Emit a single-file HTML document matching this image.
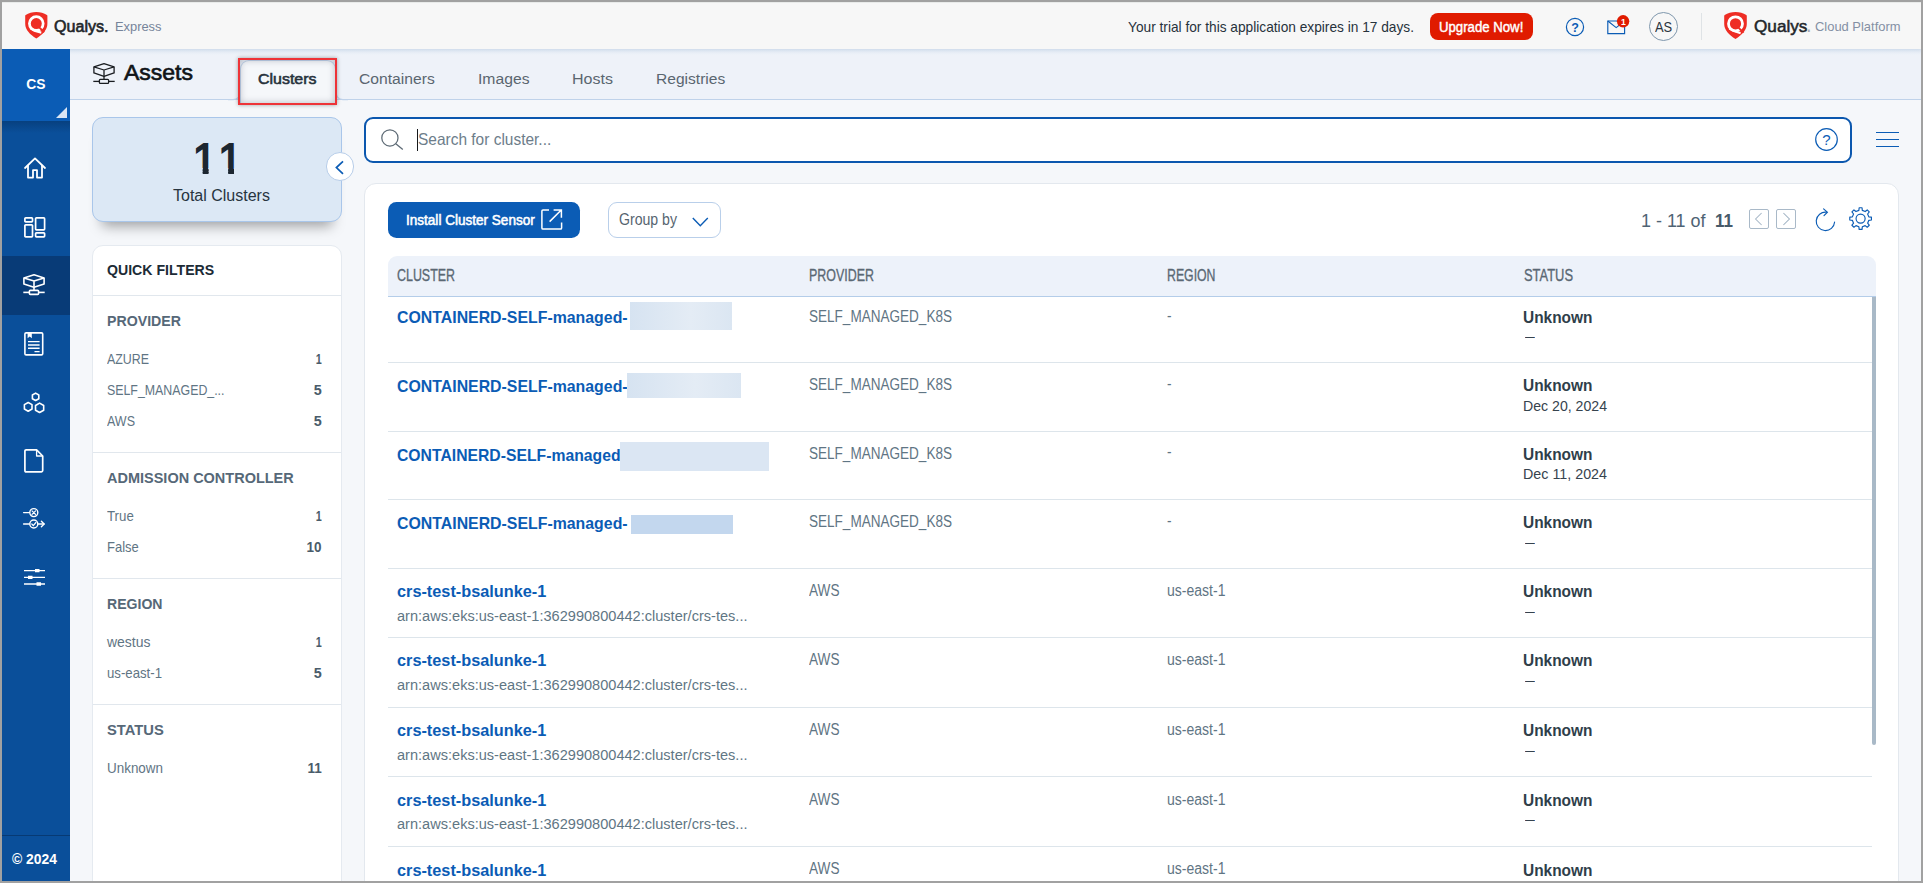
<!DOCTYPE html>
<html lang="en">
<head>
<meta charset="utf-8">
<title>Qualys Express - Assets - Clusters</title>
<style>
html,body{margin:0;padding:0;}
body{width:1923px;height:883px;overflow:hidden;background:#f5f7fa;font-family:"Liberation Sans",sans-serif;position:relative;}
#app{position:absolute;left:0;top:0;width:1923px;height:883px;overflow:hidden;}
.a{position:absolute;display:block;}
.t{position:absolute;white-space:nowrap;line-height:1;transform-origin:left center;display:block;}
svg{position:absolute;overflow:visible;}
.frame{position:absolute;background:#a1a1a1;z-index:50;}
.sep{position:absolute;left:388px;width:1484px;height:1px;background:#dde5eb;}
.fsep{position:absolute;left:93px;width:248px;height:1px;background:#e1e7ed;}
.blur{position:absolute;}
</style>
</head>
<body>
<div id="app">

<!-- main background -->
<div class="a" style="left:70px;top:100px;width:1851px;height:783px;background:#f5f7fa;"></div>

<!-- sub header -->
<div class="a" style="left:70px;top:49px;width:1851px;height:50.3px;background:#eef2f9;border-bottom:1.2px solid #bfd2ea;"></div>
<div class="a" style="left:70px;top:49px;width:1851px;height:6px;background:linear-gradient(#dfe8f3,#eef2f9);"></div>

<!-- active tab -->
<div class="a" style="left:240px;top:60px;width:94px;height:42px;background:#f5f7fa;border:1.2px solid #bfd2ea;border-bottom:none;border-radius:9px 9px 0 0;"></div>
<svg style="left:228px;top:88px" width="120" height="13" viewBox="0 0 120 13"><path d="M0 11.6 H5 Q12 11.6 12 4" fill="none" stroke="#bfd2ea" stroke-width="1.2"/><path d="M120 11.6 H115 Q108.2 11.6 108.2 4" fill="none" stroke="#bfd2ea" stroke-width="1.2"/></svg>
<div class="a" style="left:238px;top:58px;width:94.6px;height:43px;border:2px solid #ee3338;box-shadow:0 0 4px rgba(0,0,0,.35), inset 0 0 7px rgba(40,50,70,.3);"></div>

<!-- top bar -->
<div class="a" style="left:2px;top:2px;width:1919px;height:47px;background:#f7f7f7;box-shadow:0 1px 3px rgba(120,150,190,.18);"></div>
<div class="a" style="left:2px;top:2px;width:1919px;height:1px;background:#e9ebea;"></div>

<!-- logo left -->
<svg style="left:25px;top:11.9px" width="22.6" height="26.5" viewBox="0 0 23 27">
<path d="M11.5 0 C7.6 0 3.6 1.2 0.7 3.1 Q0.2 3.4 0.2 4 L0.2 12 C0.2 18 5 23 11.5 27 C18 23 22.8 18 22.8 12 L22.8 4 Q22.8 3.4 22.3 3.1 C19.4 1.2 15.4 0 11.5 0 Z" fill="#ee2d24"/>
<circle cx="11.5" cy="11.8" r="7" fill="none" stroke="#fff" stroke-width="2.8"/><path d="M5.4 16.4 Q10 19.9 16.6 21.1" fill="none" stroke="#fff" stroke-width="2.3"/><path d="M14.2 15.4 L19.6 20.6" fill="none" stroke="#ee2d24" stroke-width="1.9"/>
</svg>

<!-- upgrade button -->
<div class="a" style="left:1430px;top:13px;width:103px;height:26.5px;background:#e01b00;border-radius:8px;"></div>

<!-- help icon -->
<svg style="left:1565px;top:17px" width="20" height="20" viewBox="0 0 20 20"><circle cx="10" cy="10" r="8.6" fill="none" stroke="#0b5cb5" stroke-width="1.2"/><text x="10" y="14.6" font-size="12.5" font-weight="bold" text-anchor="middle" fill="#0b5cb5" font-family="Liberation Sans, sans-serif">?</text></svg>
<!-- mail icon -->
<svg style="left:1606px;top:14px" width="26" height="22" viewBox="0 0 26 22"><path d="M1.8 7 H18.6 V19.6 H1.8 Z" fill="none" stroke="#0b5cb5" stroke-width="1.15"/><path d="M1.8 7 L10.2 13.6 L18.6 7" fill="none" stroke="#0b5cb5" stroke-width="1.15"/><circle cx="17.1" cy="7.3" r="6.2" fill="#e01b00"/></svg>
<!-- avatar -->
<div class="a" style="left:1648.8px;top:11.8px;width:27.5px;height:27.5px;border:1.2px solid #7f97ad;border-radius:50%;"></div>
<div class="a" style="left:1700.6px;top:13px;width:1.2px;height:27px;background:#dfe3e6;"></div>
<!-- logo right -->
<svg style="left:1724px;top:11.9px" width="23" height="27" viewBox="0 0 23 27">
<path d="M11.5 0 C7.6 0 3.6 1.2 0.7 3.1 Q0.2 3.4 0.2 4 L0.2 12 C0.2 18 5 23 11.5 27 C18 23 22.8 18 22.8 12 L22.8 4 Q22.8 3.4 22.3 3.1 C19.4 1.2 15.4 0 11.5 0 Z" fill="#ee2d24"/>
<circle cx="11.5" cy="11.8" r="7" fill="none" stroke="#fff" stroke-width="2.8"/><path d="M5.4 16.4 Q10 19.9 16.6 21.1" fill="none" stroke="#fff" stroke-width="2.3"/><path d="M14.2 15.4 L19.6 20.6" fill="none" stroke="#ee2d24" stroke-width="1.9"/>
</svg>

<!-- sidebar -->
<div class="a" style="left:2px;top:49px;width:68px;height:832px;background:#0a4f9a;"></div>
<div class="a" style="left:2px;top:121px;width:68px;height:12px;background:linear-gradient(#07407f,#0a4f9a);"></div>
<div class="a" style="left:2px;top:49px;width:68px;height:72px;background:#0b5cb5;"></div>
<svg style="left:56px;top:107px" width="11" height="11" viewBox="0 0 11 11"><path d="M11 0 V11 H0 Z" fill="#dbe6f4"/></svg>
<div class="a" style="left:2px;top:255.8px;width:68px;height:59.2px;background:#083b77;"></div>
<div class="a" style="left:2px;top:835px;width:68px;height:1.2px;background:#073a74;"></div>

<!-- sidebar icons -->
<svg style="left:24px;top:157px" width="22" height="22" viewBox="0 0 22 22" fill="none" stroke="#fff" stroke-width="1.8" stroke-linejoin="round" stroke-linecap="round"><path d="M1 11 L11 1.4 L21 11"/><path d="M4 8.6 V20.6 H9 V13.2 H13 V20.6 H18 V8.6"/></svg>
<svg style="left:24px;top:216.5px" width="22" height="21" viewBox="0 0 22 21" fill="none" stroke="#fff" stroke-width="1.7"><rect x="0.9" y="0.9" width="7.6" height="4" rx="0.8"/><rect x="0.9" y="7.8" width="7.6" height="12" rx="0.8"/><rect x="11.6" y="0.9" width="9" height="12" rx="0.8"/><rect x="11.6" y="15.8" width="9" height="4" rx="0.8"/></svg>
<svg style="left:22.6px;top:274.3px" width="22" height="21" viewBox="0 0 22 21" fill="none" stroke="#fff" stroke-width="1.6" stroke-linejoin="round"><path d="M11 0.7 L21.1 3.9 V9.9 L11 13.3 L0.9 9.9 V3.9 Z"/><path d="M0.9 3.9 L11 7 L21.1 3.9 M11 7 V16.3"/><path d="M0.3 18.4 H21.7"/><rect x="6.4" y="16.4" width="9.2" height="4" rx="0.9" fill="#083b77"/></svg>
<svg style="left:24.3px;top:331.9px" width="20" height="24" viewBox="0 0 20 24" fill="none" stroke="#fff" stroke-width="1.6"><rect x="0.9" y="0.9" width="17.8" height="22" rx="1.2"/><path d="M3.6 0.9 V6.2 L5.7 4.6 L7.8 6.2 V0.9 Z" fill="#fff" stroke="none"/><path d="M4 9.6 H15.6 M4 13 H15.6 M4 16.3 H15.6 M10.5 19.6 H15.6" stroke-width="1.4"/></svg>
<svg style="left:23px;top:391.8px" width="22" height="21" viewBox="0 0 22 20.5" fill="none" stroke="#fff" stroke-width="1.6" stroke-linejoin="round"><path d="M12.60 0.90 L15.80 2.75 L15.80 6.45 L12.60 8.30 L9.40 6.45 L9.40 2.75Z"/><path d="M5.20 10.20 L9.01 12.40 L9.01 16.80 L5.20 19.00 L1.39 16.80 L1.39 12.40Z"/><path d="M16.60 10.90 L20.67 13.25 L20.67 17.95 L16.60 20.30 L12.53 17.95 L12.53 13.25Z"/></svg>
<svg style="left:24.3px;top:449.3px" width="20" height="24" viewBox="0 0 20 24" fill="none" stroke="#fff" stroke-width="1.7" stroke-linejoin="round"><path d="M2.2 0.9 H12.6 L18.7 7 V21.6 Q18.7 22.9 17.4 22.9 H2.2 Q0.9 22.9 0.9 21.6 V2.2 Q0.9 0.9 2.2 0.9 Z"/><path d="M12.6 0.9 V7 H18.7" stroke-width="1.3"/></svg>
<svg style="left:23px;top:508px" width="22" height="22" viewBox="0 0 22 22" fill="none" stroke="#fff" stroke-width="1.4" stroke-linecap="round"><path d="M0.6 4.6 H6.3 M0.6 16 H6.3 M15.3 16 H21"/><circle cx="10.8" cy="4.6" r="4"/><circle cx="10.8" cy="16" r="4"/><path d="M9 2.8 L12.6 6.4 M12.6 2.8 L9 6.4" stroke-width="1.2"/><path d="M8.8 16 L10.3 17.6 L12.9 14.5" stroke-width="1.2"/><path d="M18.4 13.3 L21.1 16 L18.4 18.7"/></svg>
<svg style="left:24px;top:568px" width="22" height="19" viewBox="0 0 22 19" fill="none" stroke="#fff" stroke-width="1.4"><path d="M0 2.6 H21 M0 9.4 H21 M0 16 H21"/><path d="M11 2.6 H15.5 M4 9.4 H8.5 M12.5 16 H17" stroke-width="3.4"/></svg>

<!-- assets icon -->
<svg style="left:92.6px;top:63.2px" width="22" height="21" viewBox="0 0 22 21" fill="none" stroke="#1a1d21" stroke-width="1.3" stroke-linejoin="round"><path d="M11 0.7 L21.1 3.9 V9.9 L11 13.3 L0.9 9.9 V3.9 Z"/><path d="M0.9 3.9 L11 7 L21.1 3.9 M11 7 V16.3"/><path d="M0.3 18.4 H21.7"/><rect x="6.4" y="16.4" width="9.2" height="4" rx="0.9" fill="#eef2f9"/></svg>

<!-- total card -->
<div class="a" style="left:92px;top:117px;width:248px;height:102.8px;background:#dce8f5;border:1.2px solid #a9c6ea;border-radius:11px;box-shadow:0 14px 13px -10px rgba(0,0,0,.36);"></div>
<!-- collapse circle -->
<div class="a" style="left:325.7px;top:152.4px;width:26.6px;height:26.6px;background:#fff;border:1.2px solid #b7cde9;border-radius:50%;"></div>
<svg style="left:334px;top:160px" width="12" height="15" viewBox="0 0 12 15"><path d="M9 1.4 L2.4 7.6 L9 13.8" fill="none" stroke="#0b5cb5" stroke-width="1.7"/></svg>

<!-- quick filter card -->
<div class="a" style="left:92px;top:245px;width:248px;height:660px;background:#fff;border:1.2px solid #e5eaf0;border-radius:11px;"></div>
<div class="fsep" style="top:295px"></div>
<div class="fsep" style="top:452px"></div>
<div class="fsep" style="top:578px"></div>
<div class="fsep" style="top:704px"></div>

<!-- search box -->
<div class="a" style="left:364px;top:117px;width:1484px;height:41.7px;background:#fff;border:2px solid #0b57ae;border-radius:9px;"></div>
<svg style="left:380.5px;top:129.3px" width="23" height="22" viewBox="0 0 23 22" fill="none" stroke="#5d6a75" stroke-width="1.25"><circle cx="8.9" cy="8.9" r="8.1"/><path d="M14.8 14.8 L21.8 20.6"/></svg>
<div class="a" style="left:417px;top:129.2px;width:1.2px;height:21.6px;background:#16191c;"></div>
<svg style="left:1815px;top:127.5px" width="23" height="23" viewBox="0 0 23 23"><circle cx="11.5" cy="11.5" r="10.8" fill="none" stroke="#0b5cb5" stroke-width="1.2"/><text x="11.5" y="16.8" font-size="15" text-anchor="middle" fill="#0b5cb5" font-family="Liberation Sans, sans-serif">?</text></svg>
<!-- hamburger -->
<div class="a" style="left:1876px;top:132.3px;width:23px;height:1.2px;background:#0b5cb5;"></div>
<div class="a" style="left:1876px;top:139.2px;width:23px;height:1.2px;background:#0b5cb5;"></div>
<div class="a" style="left:1876px;top:146.2px;width:23px;height:1.2px;background:#0b5cb5;"></div>

<!-- table card -->
<div class="a" style="left:364px;top:183px;width:1533px;height:720px;background:#fff;border:1.2px solid #e3e8ee;border-radius:12px;"></div>

<!-- install button -->
<div class="a" style="left:388px;top:202.3px;width:192.2px;height:35.7px;background:#0b5cb5;border-radius:8.5px;"></div>
<svg style="left:541px;top:208.5px" width="22" height="21" viewBox="0 0 22 21" fill="none" stroke="#fff" stroke-width="1.5"><path d="M8 0.9 H2 Q0.9 0.9 0.9 2 V19 Q0.9 20.1 2 20.1 H19.5 Q20.6 20.1 20.6 19 V13.5"/><path d="M8.6 12.6 L20 1.2 M12.6 0.9 H20.4 V8.8"/></svg>
<!-- group by -->
<div class="a" style="left:608px;top:202.3px;width:111.2px;height:33.6px;background:#fff;border:1.2px solid #b9cfea;border-radius:9px;"></div>
<svg style="left:692px;top:217px" width="17" height="11" viewBox="0 0 17 11"><path d="M0.8 1 L8.3 8.8 L15.8 1" fill="none" stroke="#0b5cb5" stroke-width="1.4"/></svg>

<!-- pager -->
<div class="a" style="left:1749px;top:208.7px;width:17.8px;height:18.4px;border:1.1px solid #a9b9c8;border-radius:2px;"></div>
<div class="a" style="left:1776px;top:208.7px;width:17.8px;height:18.4px;border:1.1px solid #a9b9c8;border-radius:2px;"></div>
<svg style="left:1754px;top:212px" width="10" height="14" viewBox="0 0 10 14"><path d="M7.6 1 L1.6 7 L7.6 13" fill="none" stroke="#a6b7c7" stroke-width="1.05"/></svg>
<svg style="left:1780.5px;top:212px" width="10" height="14" viewBox="0 0 10 14"><path d="M2.4 1 L8.4 7 L2.4 13" fill="none" stroke="#a0b2c3" stroke-width="1.05"/></svg>
<!-- refresh -->
<svg style="left:1814.3px;top:208.2px" width="23" height="24" viewBox="0 0 23 24" fill="none" stroke="#0b5cb5" stroke-width="1.15" stroke-linecap="round"><path d="M12.4 4.2 A9.2 9.2 0 1 0 20.6 14"/><path d="M9.6 0.9 L13.4 4.2 L10 7.6"/></svg>
<!-- gear -->
<svg style="left:1848.6px;top:207.2px" width="23.2" height="23.2" viewBox="0 0 24 24" fill="none" stroke="#0b5cb5" stroke-width="1.2" stroke-linejoin="round"><path d="M10.22 3.48 L10.51 0.80 L13.49 0.80 L13.78 3.48 L16.76 4.72 L18.87 3.03 L20.97 5.13 L19.28 7.24 L20.52 10.22 L23.20 10.51 L23.20 13.49 L20.52 13.78 L19.28 16.76 L20.97 18.87 L18.87 20.97 L16.76 19.28 L13.78 20.52 L13.49 23.20 L10.51 23.20 L10.22 20.52 L7.24 19.28 L5.13 20.97 L3.03 18.87 L4.72 16.76 L3.48 13.78 L0.80 13.49 L0.80 10.51 L3.48 10.22 L4.72 7.24 L3.03 5.13 L5.13 3.03 L7.24 4.72 Z"/><circle cx="12" cy="12" r="4.7"/></svg>

<!-- row separators -->
<div class="sep" style="top:362px"></div>
<div class="sep" style="top:431px"></div>
<div class="sep" style="top:499px"></div>
<div class="sep" style="top:568px"></div>
<div class="sep" style="top:637px"></div>
<div class="sep" style="top:707px"></div>
<div class="sep" style="top:776px"></div>
<div class="sep" style="top:846px"></div>

<!-- scrollbar thumb -->
<div class="a" style="left:1872.4px;top:297px;width:3.8px;height:448px;background:#a9b9c7;border-radius:0 0 2px 2px;"></div>

<!-- table header -->
<div class="a" style="left:388px;top:256px;width:1488.2px;height:40px;background:#edf2fa;border-bottom:1.2px solid #b4cde9;border-radius:9px 9px 0 0;"></div>

<span class="t" style="top:18.00px;font-size:16.4px;font-weight:400;color:#222629;-webkit-text-stroke:0.62px #222629;left:54.00px;transform:scaleX(0.9806);">Qualys.</span>
<span class="t" style="top:21.00px;font-size:12.8px;font-weight:400;color:#76849a;left:114.50px;transform:scaleX(1.0057);">Express</span>
<span class="t" style="top:21.00px;font-size:13.87px;font-weight:400;color:#27323c;left:1127.80px;transform:scaleX(0.9891);">Your trial for this application expires in 17 days.</span>
<span class="t" style="top:20.00px;font-size:14.93px;font-weight:400;color:#ffffff;-webkit-text-stroke:0.45px #ffffff;left:1439.40px;transform:scaleX(0.8837);">Upgrade Now!</span>
<span class="t" style="top:21.00px;font-size:13.87px;font-weight:400;color:#2a3540;left:1655.40px;transform:scaleX(0.9297);">AS</span>
<span class="t" style="top:18.00px;font-size:17px;font-weight:400;color:#222629;-webkit-text-stroke:0.51px #222629;left:1753.60px;transform:scaleX(1.0090);">Qualys</span>
<span class="t" style="top:18.00px;font-size:17px;font-weight:700;color:#a3aab2;left:1807.40px;transform:scaleX(0.7604);">.</span>
<span class="t" style="top:21.00px;font-size:12.8px;font-weight:400;color:#8490a4;left:1814.60px;transform:scaleX(1.0102);">Cloud Platform</span>
<span class="t" style="top:17.00px;font-size:9.4px;font-weight:700;color:#ffffff;left:1620.60px;transform:scaleX(0.9198);">1</span>
<span class="t" style="top:78.00px;font-size:13.87px;font-weight:700;color:#ffffff;left:26.30px;">CS</span>
<span class="t" style="top:853.00px;font-size:13.87px;font-weight:700;color:#ffffff;left:12.00px;">© 2024</span>
<span class="t" style="top:63.00px;font-size:21.33px;font-weight:400;color:#101418;-webkit-text-stroke:0.64px #101418;left:124.00px;transform:scaleX(1.0779);">Assets</span>
<span class="t" style="top:72.00px;font-size:14.93px;font-weight:400;color:#27323c;-webkit-text-stroke:0.57px #27323c;left:257.50px;transform:scaleX(1.0688);">Clusters</span>
<span class="t" style="top:72.00px;font-size:14.93px;font-weight:400;color:#5a6670;left:358.75px;transform:scaleX(1.0496);">Containers</span>
<span class="t" style="top:72.00px;font-size:14.93px;font-weight:400;color:#5a6670;left:477.50px;transform:scaleX(1.0524);">Images</span>
<span class="t" style="top:72.00px;font-size:14.93px;font-weight:400;color:#5a6670;left:572.00px;transform:scaleX(1.0745);">Hosts</span>
<span class="t" style="top:72.00px;font-size:14.93px;font-weight:400;color:#5a6670;left:656.25px;transform:scaleX(1.0438);">Registries</span>
<span class="t" style="top:137.00px;font-size:42.8px;font-weight:400;color:#1c2630;left:192.86px;-webkit-text-stroke:1.8px #1c2630;clip-path:polygon(0 0,100% 0,100% 31px,15.65px 31px,15.65px 100%,9.85px 100%,9.85px 31px,0 31px);">1</span>
<span class="t" style="top:137.00px;font-size:42.8px;font-weight:400;color:#1c2630;left:218.36px;-webkit-text-stroke:1.8px #1c2630;clip-path:polygon(0 0,100% 0,100% 31px,15.65px 31px,15.65px 100%,9.85px 100%,9.85px 31px,0 31px);">1</span>
<span class="t" style="top:188.00px;font-size:16px;font-weight:400;color:#27343f;left:173.00px;">Total Clusters</span>
<span class="t" style="top:263.00px;font-size:14.93px;font-weight:700;color:#1c2b36;left:107.00px;transform:scaleX(0.9466);">QUICK FILTERS</span>
<span class="t" style="top:314.00px;font-size:14.93px;font-weight:700;color:#566878;left:107.00px;transform:scaleX(0.9493);">PROVIDER</span>
<span class="t" style="top:353.00px;font-size:13.87px;font-weight:400;color:#5f7584;left:107.00px;transform:scaleX(0.8939);">AZURE</span>
<span class="t" style="top:353.00px;font-size:13.87px;font-weight:700;color:#4a5c6a;right:1601.50px;transform-origin:right center;transform:scaleX(0.7773);">1</span>
<span class="t" style="top:384.00px;font-size:13.87px;font-weight:400;color:#5f7584;left:107.00px;transform:scaleX(0.8921);">SELF_MANAGED_...</span>
<span class="t" style="top:384.00px;font-size:13.87px;font-weight:700;color:#4a5c6a;right:1601.50px;transform-origin:right center;transform:scaleX(1.0364);">5</span>
<span class="t" style="top:415.00px;font-size:13.87px;font-weight:400;color:#5f7584;left:107.00px;transform:scaleX(0.9014);">AWS</span>
<span class="t" style="top:415.00px;font-size:13.87px;font-weight:700;color:#4a5c6a;right:1601.50px;transform-origin:right center;transform:scaleX(1.0364);">5</span>
<span class="t" style="top:471.00px;font-size:14.93px;font-weight:700;color:#566878;left:107.00px;transform:scaleX(0.9710);">ADMISSION CONTROLLER</span>
<span class="t" style="top:510.00px;font-size:13.87px;font-weight:400;color:#5f7584;left:107.00px;transform:scaleX(0.9559);">True</span>
<span class="t" style="top:510.00px;font-size:13.87px;font-weight:700;color:#4a5c6a;right:1601.50px;transform-origin:right center;transform:scaleX(0.7773);">1</span>
<span class="t" style="top:541.00px;font-size:13.87px;font-weight:400;color:#5f7584;left:107.00px;transform:scaleX(0.9368);">False</span>
<span class="t" style="top:541.00px;font-size:13.87px;font-weight:700;color:#4a5c6a;right:1601.50px;transform-origin:right center;transform:scaleX(0.9726);">10</span>
<span class="t" style="top:597.00px;font-size:14.93px;font-weight:700;color:#566878;left:107.00px;transform:scaleX(0.9427);">REGION</span>
<span class="t" style="top:636.00px;font-size:13.87px;font-weight:400;color:#5f7584;left:107.00px;transform:scaleX(1.0083);">westus</span>
<span class="t" style="top:636.00px;font-size:13.87px;font-weight:700;color:#4a5c6a;right:1601.50px;transform-origin:right center;transform:scaleX(0.7773);">1</span>
<span class="t" style="top:667.00px;font-size:13.87px;font-weight:400;color:#5f7584;left:107.00px;transform:scaleX(0.9519);">us-east-1</span>
<span class="t" style="top:667.00px;font-size:13.87px;font-weight:700;color:#4a5c6a;right:1601.50px;transform-origin:right center;transform:scaleX(1.0364);">5</span>
<span class="t" style="top:723.00px;font-size:14.93px;font-weight:700;color:#566878;left:107.00px;transform:scaleX(0.9872);">STATUS</span>
<span class="t" style="top:762.00px;font-size:13.87px;font-weight:400;color:#5f7584;left:107.00px;transform:scaleX(0.9692);">Unknown</span>
<span class="t" style="top:762.00px;font-size:13.87px;font-weight:700;color:#4a5c6a;right:1601.50px;transform-origin:right center;transform:scaleX(0.9723);">11</span>
<span class="t" style="top:131.00px;font-size:16.5px;font-weight:400;color:#6d7d8a;left:418.00px;transform:scaleX(0.9373);">Search for cluster...</span>
<span class="t" style="top:214.00px;font-size:13.87px;font-weight:400;color:#ffffff;-webkit-text-stroke:0.53px #ffffff;left:406.25px;transform:scaleX(0.9775);">Install Cluster Sensor</span>
<span class="t" style="top:212.00px;font-size:15.7px;font-weight:400;color:#56646f;left:618.75px;transform:scaleX(0.8988);">Group by</span>
<span class="t" style="top:212.00px;font-size:18.7px;font-weight:400;color:#4f6374;left:1641.00px;transform:scaleX(0.9600);">1 - 11 of</span>
<span class="t" style="top:212.00px;font-size:18.7px;font-weight:700;color:#475a6a;left:1715.00px;transform:scaleX(0.9107);">11</span>
<span class="t" style="top:267.00px;font-size:17.07px;font-weight:400;color:#5a6874;-webkit-text-stroke:0.34px #5a6874;left:397.00px;transform:scaleX(0.7283);">CLUSTER</span>
<span class="t" style="top:267.00px;font-size:17.07px;font-weight:400;color:#5a6874;-webkit-text-stroke:0.34px #5a6874;left:809.00px;transform:scaleX(0.7293);">PROVIDER</span>
<span class="t" style="top:267.00px;font-size:17.07px;font-weight:400;color:#5a6874;-webkit-text-stroke:0.34px #5a6874;left:1167.00px;transform:scaleX(0.7205);">REGION</span>
<span class="t" style="top:267.00px;font-size:17.07px;font-weight:400;color:#5a6874;-webkit-text-stroke:0.34px #5a6874;left:1523.50px;transform:scaleX(0.7564);">STATUS</span>
<span class="t" style="top:309.00px;font-size:17.07px;font-weight:700;color:#0b5cb5;left:397.00px;transform:scaleX(0.9297);">CONTAINERD-SELF-managed-</span>
<span class="t" style="top:309.00px;font-size:16px;font-weight:400;color:#5f7584;left:809.00px;transform:scaleX(0.8464);">SELF_MANAGED_K8S</span>
<span class="t" style="top:308.00px;font-size:16px;font-weight:400;color:#5f7584;left:1167.00px;transform:scaleX(0.8446);">-</span>
<span class="t" style="top:309.00px;font-size:17.07px;font-weight:700;color:#2f3e4a;left:1522.70px;transform:scaleX(0.9052);">Unknown</span>
<span class="t" style="top:329.00px;font-size:14px;font-weight:400;color:#36434e;left:1524.75px;transform:scaleX(0.6964);">—</span>
<span class="t" style="top:378.00px;font-size:17.07px;font-weight:700;color:#0b5cb5;left:397.00px;transform:scaleX(0.9297);">CONTAINERD-SELF-managed-</span>
<span class="t" style="top:377.00px;font-size:16px;font-weight:400;color:#5f7584;left:809.00px;transform:scaleX(0.8464);">SELF_MANAGED_K8S</span>
<span class="t" style="top:376.00px;font-size:16px;font-weight:400;color:#5f7584;left:1167.00px;transform:scaleX(0.8446);">-</span>
<span class="t" style="top:377.00px;font-size:17.07px;font-weight:700;color:#2f3e4a;left:1522.70px;transform:scaleX(0.9052);">Unknown</span>
<span class="t" style="top:399.00px;font-size:14.4px;font-weight:400;color:#36434e;left:1523.20px;transform:scaleX(0.9812);">Dec 20, 2024</span>
<span class="t" style="top:447.00px;font-size:17.07px;font-weight:700;color:#0b5cb5;left:397.00px;transform:scaleX(0.9222);">CONTAINERD-SELF-managed</span>
<span class="t" style="top:446.00px;font-size:16px;font-weight:400;color:#5f7584;left:809.00px;transform:scaleX(0.8464);">SELF_MANAGED_K8S</span>
<span class="t" style="top:444.00px;font-size:16px;font-weight:400;color:#5f7584;left:1167.00px;transform:scaleX(0.8446);">-</span>
<span class="t" style="top:446.00px;font-size:17.07px;font-weight:700;color:#2f3e4a;left:1522.70px;transform:scaleX(0.9052);">Unknown</span>
<span class="t" style="top:467.00px;font-size:14.4px;font-weight:400;color:#36434e;left:1523.20px;transform:scaleX(0.9935);">Dec 11, 2024</span>
<span class="t" style="top:515.00px;font-size:17.07px;font-weight:700;color:#0b5cb5;left:397.00px;transform:scaleX(0.9297);">CONTAINERD-SELF-managed-</span>
<span class="t" style="top:514.00px;font-size:16px;font-weight:400;color:#5f7584;left:809.00px;transform:scaleX(0.8464);">SELF_MANAGED_K8S</span>
<span class="t" style="top:513.00px;font-size:16px;font-weight:400;color:#5f7584;left:1167.00px;transform:scaleX(0.8446);">-</span>
<span class="t" style="top:514.00px;font-size:17.07px;font-weight:700;color:#2f3e4a;left:1522.70px;transform:scaleX(0.9052);">Unknown</span>
<span class="t" style="top:535.00px;font-size:14px;font-weight:400;color:#36434e;left:1524.75px;transform:scaleX(0.6964);">—</span>
<span class="t" style="top:583.00px;font-size:17.07px;font-weight:700;color:#0b5cb5;left:397.00px;transform:scaleX(0.9539);">crs-test-bsalunke-1</span>
<span class="t" style="top:609.00px;font-size:14.93px;font-weight:400;color:#5f7684;left:397.00px;transform:scaleX(0.9759);">arn:aws:eks:us-east-1:362990800442:cluster/crs-tes...</span>
<span class="t" style="top:583.00px;font-size:16px;font-weight:400;color:#5f7584;left:809.00px;transform:scaleX(0.8505);">AWS</span>
<span class="t" style="top:583.00px;font-size:16px;font-weight:400;color:#5f7584;left:1166.70px;transform:scaleX(0.8770);">us-east-1</span>
<span class="t" style="top:583.00px;font-size:17.07px;font-weight:700;color:#2f3e4a;left:1522.70px;transform:scaleX(0.9052);">Unknown</span>
<span class="t" style="top:604.00px;font-size:14px;font-weight:400;color:#36434e;left:1524.75px;transform:scaleX(0.6964);">—</span>
<span class="t" style="top:652.00px;font-size:17.07px;font-weight:700;color:#0b5cb5;left:397.00px;transform:scaleX(0.9539);">crs-test-bsalunke-1</span>
<span class="t" style="top:678.00px;font-size:14.93px;font-weight:400;color:#5f7684;left:397.00px;transform:scaleX(0.9759);">arn:aws:eks:us-east-1:362990800442:cluster/crs-tes...</span>
<span class="t" style="top:652.00px;font-size:16px;font-weight:400;color:#5f7584;left:809.00px;transform:scaleX(0.8505);">AWS</span>
<span class="t" style="top:652.00px;font-size:16px;font-weight:400;color:#5f7584;left:1166.70px;transform:scaleX(0.8770);">us-east-1</span>
<span class="t" style="top:652.00px;font-size:17.07px;font-weight:700;color:#2f3e4a;left:1522.70px;transform:scaleX(0.9052);">Unknown</span>
<span class="t" style="top:673.00px;font-size:14px;font-weight:400;color:#36434e;left:1524.75px;transform:scaleX(0.6964);">—</span>
<span class="t" style="top:722.00px;font-size:17.07px;font-weight:700;color:#0b5cb5;left:397.00px;transform:scaleX(0.9539);">crs-test-bsalunke-1</span>
<span class="t" style="top:748.00px;font-size:14.93px;font-weight:400;color:#5f7684;left:397.00px;transform:scaleX(0.9759);">arn:aws:eks:us-east-1:362990800442:cluster/crs-tes...</span>
<span class="t" style="top:722.00px;font-size:16px;font-weight:400;color:#5f7584;left:809.00px;transform:scaleX(0.8505);">AWS</span>
<span class="t" style="top:722.00px;font-size:16px;font-weight:400;color:#5f7584;left:1166.70px;transform:scaleX(0.8770);">us-east-1</span>
<span class="t" style="top:722.00px;font-size:17.07px;font-weight:700;color:#2f3e4a;left:1522.70px;transform:scaleX(0.9052);">Unknown</span>
<span class="t" style="top:743.00px;font-size:14px;font-weight:400;color:#36434e;left:1524.75px;transform:scaleX(0.6964);">—</span>
<span class="t" style="top:792.00px;font-size:17.07px;font-weight:700;color:#0b5cb5;left:397.00px;transform:scaleX(0.9539);">crs-test-bsalunke-1</span>
<span class="t" style="top:817.00px;font-size:14.93px;font-weight:400;color:#5f7684;left:397.00px;transform:scaleX(0.9759);">arn:aws:eks:us-east-1:362990800442:cluster/crs-tes...</span>
<span class="t" style="top:792.00px;font-size:16px;font-weight:400;color:#5f7584;left:809.00px;transform:scaleX(0.8505);">AWS</span>
<span class="t" style="top:792.00px;font-size:16px;font-weight:400;color:#5f7584;left:1166.70px;transform:scaleX(0.8770);">us-east-1</span>
<span class="t" style="top:792.00px;font-size:17.07px;font-weight:700;color:#2f3e4a;left:1522.70px;transform:scaleX(0.9052);">Unknown</span>
<span class="t" style="top:812.00px;font-size:14px;font-weight:400;color:#36434e;left:1524.75px;transform:scaleX(0.6964);">—</span>
<span class="t" style="top:862.00px;font-size:17.07px;font-weight:700;color:#0b5cb5;left:397.00px;transform:scaleX(0.9539);">crs-test-bsalunke-1</span>
<span class="t" style="top:861.00px;font-size:16px;font-weight:400;color:#5f7584;left:809.00px;transform:scaleX(0.8505);">AWS</span>
<span class="t" style="top:861.00px;font-size:16px;font-weight:400;color:#5f7584;left:1166.70px;transform:scaleX(0.8770);">us-east-1</span>
<span class="t" style="top:862.00px;font-size:17.07px;font-weight:700;color:#2f3e4a;left:1522.70px;transform:scaleX(0.9052);">Unknown</span>

<!-- redaction boxes -->
<div class="blur" style="left:629.6px;top:302px;width:102.9px;height:28px;background:linear-gradient(90deg,#d6e3f1,#e4ecf5 60%,#dbe6f2);"></div>
<div class="blur" style="left:626.6px;top:372.5px;width:114.4px;height:25px;background:linear-gradient(90deg,#d6e3f1,#e4ecf5 60%,#dbe6f2);"></div>
<div class="blur" style="left:620px;top:442px;width:148.7px;height:29px;background:#dbe6f3;"></div>
<div class="blur" style="left:631px;top:515px;width:101.5px;height:19.2px;background:#c3d7ee;"></div>


<!-- frame -->
<div class="frame" style="left:0;top:0;width:1923px;height:2px;"></div>
<div class="frame" style="left:0;top:881px;width:1923px;height:2px;"></div>
<div class="frame" style="left:0;top:0;width:2px;height:883px;"></div>
<div class="frame" style="left:1921px;top:0;width:2px;height:883px;"></div>
</div>
</body>
</html>
